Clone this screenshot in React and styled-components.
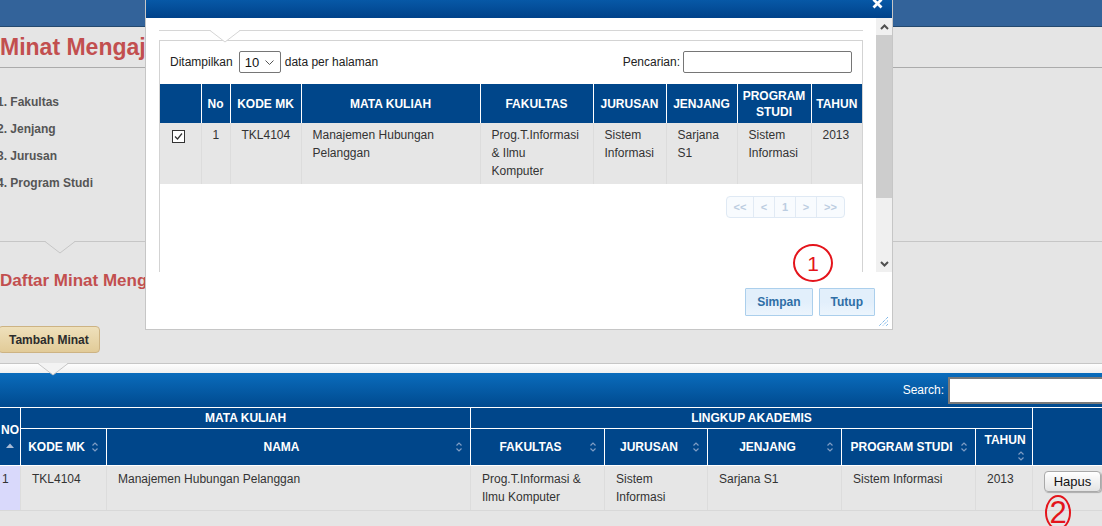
import React from "react";
import styled, { createGlobalStyle } from "styled-components";

const GlobalStyle = createGlobalStyle`
  html, body { margin: 0; padding: 0; background: #e5e5e5; overflow: hidden; }
  body { font-family: "Liberation Sans", Arial, sans-serif; font-size: 12px; color: #333; }
`;

const FONT = `"Liberation Sans", Arial, sans-serif`;

/* ---------- page behind the dialog ---------- */

const Viewport = styled.div`
  position: relative;
  width: 1102px;
  height: 526px;
  overflow: hidden;
  background: #e5e5e5;
`;

const Page = styled.div`
  margin-left: -10px;
  width: 1122px;
`;

const TopBar = styled.div`
  height: 26px;
  background: #33639a;
  border-bottom: 1px solid #24496f;
`;

const PageTitle = styled.h1`
  margin: 0;
  padding-left: 10px;
  height: 40px;
  font: bold 23px/40px ${FONT};
  color: #c24f4f;
  border-bottom: 1px solid #ababab;
`;

const Steps = styled.ol`
  list-style: none;
  margin: 21px 0 0;
  padding: 0 0 0 7px;
`;

const Step = styled.li`
  line-height: 27px;
  font-weight: bold;
  font-size: 12px;
  color: #555;
`;

const Divider = styled.div`
  position: relative;
  margin-top: ${(p) => p.$mt || 0}px;
  height: ${(p) => p.$h || 0}px;
  border-top: 1px solid ${(p) => p.$line || "#c6c6c6"};
  background: ${(p) => p.$fill || "transparent"};
`;

const NotchSvg = styled.svg`
  position: absolute;
  top: -1px;
  left: ${(p) => p.$x}px;
  overflow: visible;
`;

const Notch = ({ x, fill, line = "#c6c6c6" }) => (
  <NotchSvg $x={x} width="30" height="13" viewBox="0 0 30 13">
    <polygon points="0,0 15,12 30,0" fill={fill} />
    <polyline points="0,0.5 15,12 30,0.5" fill="none" stroke={line} strokeWidth="1" />
  </NotchSvg>
);

const SectionTitle = styled.h2`
  margin: 29px 0 0;
  padding-left: 10px;
  font: bold 17px/20px ${FONT};
  color: #c24f4f;
`;

const AddButton = styled.button`
  display: block;
  margin: 35px 0 0 8px;
  height: 27px;
  padding: 0 10px;
  font: bold 12px ${FONT};
  color: #2c2c2c;
  background: linear-gradient(#eee0bb, #e2cb98);
  border: 1px solid #cdb383;
  border-radius: 4px;
`;

const Toolbar = styled.div`
  height: 34px;
  display: flex;
  align-items: center;
  justify-content: flex-end;
  padding-right: 2px;
  background: linear-gradient(#0a6cbc, #004a8f);
`;

const SearchLabel = styled.span`
  color: #fff;
  font-size: 12px;
  margin-right: 4px;
`;

const SearchInput = styled.div`
  width: 160px;
  height: 23px;
  background: #fff;
  border: 2px solid #7a7a7a;
  border-right: none;
`;

const Grid = styled.table`
  width: 1122px;
  table-layout: fixed;
  border-collapse: collapse;
`;

const Col = styled.col`
  width: ${(p) => p.$w}px;
`;

const HeadRow = styled.tr`
  height: ${(p) => p.$h}px;
`;

const HeadCell = styled.th`
  position: relative;
  background: #00468a;
  color: #fff;
  font: bold 12px/16px ${FONT};
  text-align: center;
  vertical-align: ${(p) => (p.$stack ? "top" : "middle")};
  padding: ${(p) => (p.$stack ? `${p.$stack}px 2px 0 ${p.$indent || 4}px` : `0 ${p.$sort ? 20 : 6}px 0 6px`)};
  border: 1px solid #fff;
`;

const SortSvg = styled.svg`
  position: absolute;
  right: ${(p) => p.$r || 7}px;
  ${(p) => (p.$bottom != null ? `bottom: ${p.$bottom}px;` : `top: 50%; transform: translateY(-50%);`)}
`;

const SortBoth = ({ bottom }) => (
  <SortSvg $bottom={bottom} width="8" height="12" viewBox="0 0 8 12">
    <polyline points="1.5,4.5 4,2 6.5,4.5" fill="none" stroke="#7f9dc4" strokeWidth="1.2" />
    <polyline points="1.5,7.5 4,10 6.5,7.5" fill="none" stroke="#7f9dc4" strokeWidth="1.2" />
  </SortSvg>
);

const SortAsc = () => (
  <SortSvg $bottom={17} $r={6} width="8" height="5" viewBox="0 0 8 5">
    <polygon points="0,5 4,0.5 8,5" fill="#a9bbd6" />
  </SortSvg>
);

const BodyCell = styled.td`
  padding: 4px 10px 4px 11px;
  line-height: 18px;
  vertical-align: top;
  color: #333;
  background: ${(p) => (p.$hl ? "#d9d9fb" : "#e6e6e6")};
  border-left: 1px solid #dcdcdc;
  border-bottom: 1px solid #d8d8d8;
`;

const DeleteButton = styled.button`
  margin-top: 1px;
  width: 57px;
  height: 21px;
  padding: 0;
  font: 13px ${FONT};
  color: #111;
  background: linear-gradient(#ffffff, #e4e4e4);
  border: 1px solid #a9a9a9;
  border-radius: 4px;
  box-shadow: 1px 1px 1px rgba(0, 0, 0, 0.25);
`;

/* ---------- dialog ---------- */

const Dialog = styled.div`
  position: absolute;
  left: 145px;
  top: -12px;
  width: 748px;
  height: 342px;
  box-sizing: border-box;
  border: 1px solid #c6c6c6;
  background: #fff;
  display: flex;
  flex-direction: column;
`;

const TitleBar = styled.div`
  height: 29px;
  flex: none;
  display: flex;
  align-items: center;
  justify-content: flex-end;
  padding-right: 9px;
  background: linear-gradient(#0b66b8, #00428a);
`;

const DialogBody = styled.div`
  height: 254px;
  flex: none;
  display: flex;
`;

const Scroller = styled.div`
  flex: 1;
  overflow: hidden;
  padding: 12px 13px 0;
`;

const ScrollTrack = styled.div`
  width: 16px;
  display: flex;
  flex-direction: column;
  background: #f0f0f0;
`;

const ScrollArrow = styled.div`
  height: 17px;
  display: flex;
  align-items: center;
  justify-content: center;
  margin-top: ${(p) => (p.$end ? "auto" : 0)};
`;

const ScrollThumb = styled.div`
  height: 163px;
  background: #cdcdcd;
`;

const Panel = styled.div`
  border: 1px solid #d3d3d3;
  height: 400px;
`;

const Controls = styled.div`
  display: flex;
  align-items: center;
  justify-content: space-between;
  height: 22px;
  margin: 10px 10px 0;
  color: #222;
`;

const ControlGroup = styled.div`
  display: flex;
  align-items: center;
`;

const SelectBox = styled.div`
  width: 42px;
  height: 22px;
  box-sizing: border-box;
  margin: 0 4px 0 6px;
  padding: 0 6px 0 5px;
  display: flex;
  align-items: center;
  justify-content: space-between;
  border: 1px solid #767676;
  border-radius: 2px;
  font-size: 13px;
  color: #111;
`;

const FieldInput = styled.div`
  width: 169px;
  height: 22px;
  box-sizing: border-box;
  margin-left: 3px;
  border: 1px solid #767676;
  border-radius: 2px;
`;

const PickTable = styled.table`
  width: 702px;
  margin-top: 11px;
  table-layout: fixed;
  border-collapse: collapse;
`;

const PickHead = styled.th`
  height: 33px;
  padding: 3px 4px;
  background: #00468a;
  color: #fff;
  font: bold 12px/16px ${FONT};
  text-align: center;
  border-left: 1px solid #fff;
  &:first-child { border-left: none; }
`;

const PickCell = styled.td`
  padding: 3px 14px 4px 11px;
  line-height: 18px;
  vertical-align: top;
  text-align: ${(p) => (p.$center ? "center" : "left")};
  background: #e6e6e6;
  color: #333;
  border-left: 1px solid #dcdcdc;
  &:first-child { border-left: none; }
`;

const CheckSvg = styled.svg`
  display: block;
  margin: 4px auto 0;
`;

const Pager = styled.div`
  display: flex;
  justify-content: flex-end;
  margin-top: 12px;
  padding-right: 17px;
`;

const PagerGroup = styled.div`
  display: flex;
  height: 22px;
  box-sizing: border-box;
  border: 1px solid #dfe9f4;
  border-radius: 4px;
  background: #f8fbfe;
`;

const PagerItem = styled.span`
  width: ${(p) => p.$w}px;
  text-align: center;
  font: bold 11px/20px ${FONT};
  color: #bccde1;
  border-left: 1px solid #e1eaf4;
  &:first-child { border-left: none; }
`;

const ButtonPane = styled.div`
  position: relative;
  flex: 1;
  display: flex;
  justify-content: flex-end;
  align-items: flex-start;
  gap: 6px;
  padding: 16px 17px 0 0;
`;

const PaneButton = styled.button`
  height: 28px;
  padding: 0 11px;
  font: bold 12px ${FONT};
  color: #2e6ea6;
  background: linear-gradient(#e2effb, #e2effb 50%, #ecf5fd);
  border: 1px solid #abcfec;
  border-radius: 1px;
`;

const ResizeGrip = styled.svg`
  position: absolute;
  right: 3px;
  bottom: 2px;
`;

/* ---------- annotations ---------- */

const Marker = styled.div`
  position: absolute;
  left: ${(p) => p.$x}px;
  top: ${(p) => p.$y}px;
  width: ${(p) => p.$w}px;
  height: ${(p) => p.$h}px;
  box-sizing: border-box;
  border: 2.5px solid #e4141b;
  border-radius: 50%;
  display: flex;
  align-items: center;
  justify-content: center;
  font: ${(p) => p.$size}px/1 ${FONT};
  color: #e4141b;
`;

const steps = ["1. Fakultas", "2. Jenjang", "3. Jurusan", "4. Program Studi"];

const pickCols = [
  { label: "", w: 41 },
  { label: "No", w: 29 },
  { label: "KODE MK", w: 71 },
  { label: "MATA KULIAH", w: 179 },
  { label: "FAKULTAS", w: 113 },
  { label: "JURUSAN", w: 73 },
  { label: "JENJANG", w: 71 },
  { label: "PROGRAM STUDI", w: 74 },
  { label: "TAHUN", w: 51 },
];

const pickRow = [
  "TKL4104",
  "Manajemen Hubungan Pelanggan",
  "Prog.T.Informasi & Ilmu Komputer",
  "Sistem Informasi",
  "Sarjana S1",
  "Sistem Informasi",
  "2013",
];

const gridCols = [30, 86, 364, 134, 103, 134, 134, 57, 80];
const subHeads = ["KODE MK", "NAMA", "FAKULTAS", "JURUSAN", "JENJANG", "PROGRAM STUDI"];
const minatRow = [
  "TKL4104",
  "Manajemen Hubungan Pelanggan",
  "Prog.T.Informasi & Ilmu Komputer",
  "Sistem Informasi",
  "Sarjana S1",
  "Sistem Informasi",
  "2013",
];

const pages = [
  { t: "<<", w: 26 },
  { t: "<", w: 20 },
  { t: "1", w: 20 },
  { t: ">", w: 20 },
  { t: ">>", w: 27 },
];

const Chevron = ({ up }) => (
  <svg width="9" height="6" viewBox="0 0 9 6">
    <polyline
      points={up ? "1,5 4.5,1.5 8,5" : "1,1 4.5,4.5 8,1"}
      fill="none"
      stroke="#505050"
      strokeWidth="2"
    />
  </svg>
);

export default function App() {
  return (
    <Viewport>
      <GlobalStyle />
      <Page>
        <TopBar />
        <PageTitle>Minat Mengajar</PageTitle>
        <Steps>
          {steps.map((s) => (
            <Step key={s}>{s}</Step>
          ))}
        </Steps>
        <Divider $mt={44}>
          <Notch x={55} fill="#e5e5e5" />
        </Divider>
        <SectionTitle>Daftar Minat Mengajar</SectionTitle>
        <AddButton>Tambah Minat</AddButton>
        <Divider $mt={10} $h={9} $fill="linear-gradient(#fdfdfd, #f0f0f0)">
          <Notch x={48} fill="#f3f3f3" />
        </Divider>
        <Toolbar>
          <SearchLabel>Search:</SearchLabel>
          <SearchInput />
        </Toolbar>
        <Grid>
          <colgroup>
            {gridCols.map((w, i) => (
              <Col key={i} $w={w} />
            ))}
          </colgroup>
          <thead>
            <HeadRow $h={21}>
              <HeadCell rowSpan={2} $stack={14} $indent={10}>
                NO
                <SortAsc />
              </HeadCell>
              <HeadCell colSpan={2}>MATA KULIAH</HeadCell>
              <HeadCell colSpan={5}>LINGKUP AKADEMIS</HeadCell>
              <HeadCell rowSpan={2} />
            </HeadRow>
            <HeadRow $h={37}>
              {subHeads.map((h) => (
                <HeadCell key={h} $sort>
                  {h}
                  <SortBoth />
                </HeadCell>
              ))}
              <HeadCell $stack={3}>
                TAHUN
                <SortBoth bottom={3} />
              </HeadCell>
            </HeadRow>
          </thead>
          <tbody>
            <tr>
              <BodyCell $hl>1</BodyCell>
              {minatRow.map((c, i) => (
                <BodyCell key={i}>{c}</BodyCell>
              ))}
              <BodyCell>
                <DeleteButton>Hapus</DeleteButton>
              </BodyCell>
            </tr>
          </tbody>
        </Grid>
      </Page>

      <Dialog>
        <TitleBar>
          <svg width="11" height="11" viewBox="0 0 11 11">
            <path d="M1.5 1.5 L9.5 9.5 M9.5 1.5 L1.5 9.5" stroke="#fff" strokeWidth="2.8" />
          </svg>
        </TitleBar>
        <DialogBody>
          <Scroller>
            <Divider $h={9} $line="#d6d6d6">
              <Notch x={51} fill="#fff" line="#d6d6d6" />
            </Divider>
            <Panel>
              <Controls>
                <ControlGroup>
                  Ditampilkan
                  <SelectBox>
                    10
                    <svg width="9" height="5" viewBox="0 0 9 5">
                      <polyline points="0.5,0.5 4.5,4.5 8.5,0.5" fill="none" stroke="#555" strokeWidth="1" />
                    </svg>
                  </SelectBox>
                  data per halaman
                </ControlGroup>
                <ControlGroup>
                  Pencarian:
                  <FieldInput />
                </ControlGroup>
              </Controls>
              <PickTable>
                <colgroup>
                  {pickCols.map((c, i) => (
                    <Col key={i} $w={c.w} />
                  ))}
                </colgroup>
                <thead>
                  <tr>
                    {pickCols.map((c, i) => (
                      <PickHead key={i}>{c.label}</PickHead>
                    ))}
                  </tr>
                </thead>
                <tbody>
                  <tr>
                    <PickCell $center>
                      <CheckSvg width="13" height="13" viewBox="0 0 13 13">
                        <rect x="0.5" y="0.5" width="12" height="12" fill="#fff" stroke="#333" />
                        <polyline points="3,6.5 5.5,9 10,3.5" fill="none" stroke="#333" strokeWidth="1.2" />
                      </CheckSvg>
                    </PickCell>
                    <PickCell $center>1</PickCell>
                    {pickRow.map((c, i) => (
                      <PickCell key={i}>{c}</PickCell>
                    ))}
                  </tr>
                </tbody>
              </PickTable>
              <Pager>
                <PagerGroup>
                  {pages.map((p) => (
                    <PagerItem key={p.t} $w={p.w}>
                      {p.t}
                    </PagerItem>
                  ))}
                </PagerGroup>
              </Pager>
            </Panel>
          </Scroller>
          <ScrollTrack>
            <ScrollArrow>
              <Chevron up />
            </ScrollArrow>
            <ScrollThumb />
            <ScrollArrow $end>
              <Chevron />
            </ScrollArrow>
          </ScrollTrack>
        </DialogBody>
        <ButtonPane>
          <PaneButton>Simpan</PaneButton>
          <PaneButton>Tutup</PaneButton>
          <ResizeGrip width="11" height="11" viewBox="0 0 11 11">
            <path d="M10 1 L1 10 M10 4.5 L4.5 10 M10 8 L8 10" stroke="#4a9ae0" strokeWidth="1" strokeDasharray="1 1" />
          </ResizeGrip>
        </ButtonPane>
      </Dialog>

      <Marker $x={793} $y={244} $w={40} $h={38} $size={21}>
        1
      </Marker>
      <Marker $x={1045} $y={495} $w={26} $h={35} $size={31}>
        2
      </Marker>
    </Viewport>
  );
}
